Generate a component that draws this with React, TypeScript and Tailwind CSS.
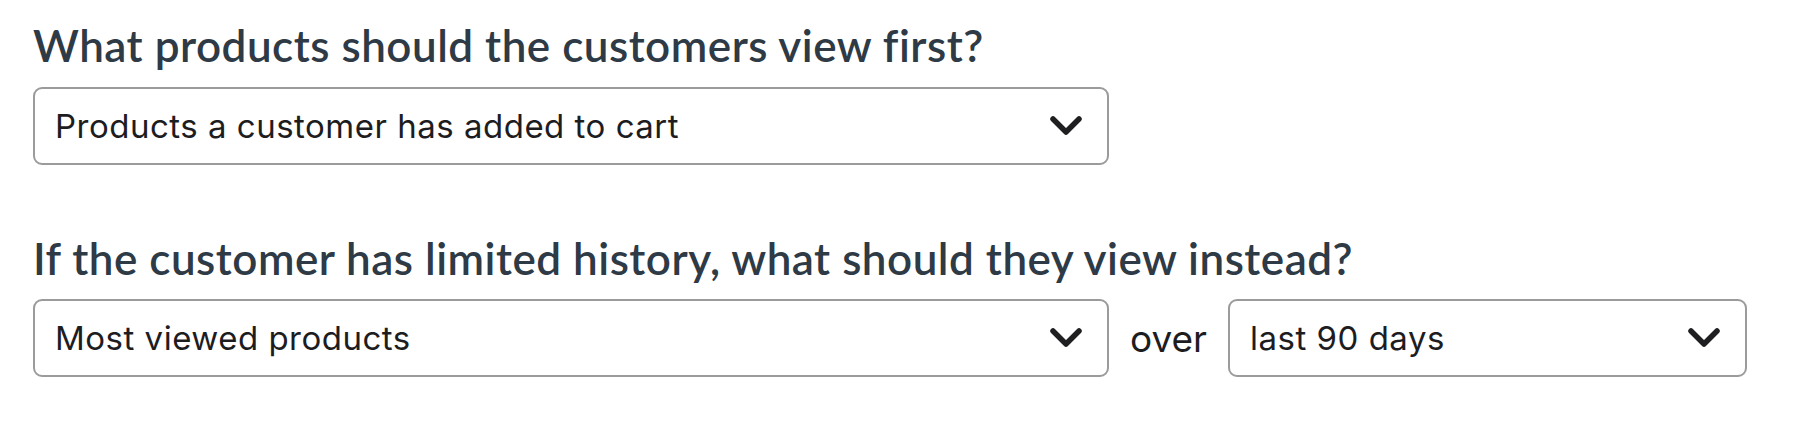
import React from "react";

function Chevron() {
  return (
    <svg width="34" height="22" viewBox="0 0 34 22" fill="none" className="shrink-0">
      <polyline
        points="4,4 17,17 30,4"
        stroke="#1f1f21"
        strokeWidth="5.5"
        strokeLinecap="round"
        strokeLinejoin="round"
      />
    </svg>
  );
}

function Select({ label, width }: { label: string; width: string }) {
  return (
    <div
      className={`${width} h-[78px] border-2 border-[#9b9b9b] rounded-[9px] bg-white flex items-center justify-between pl-[20px] pr-[24px]`}
    >
      <span className="text-[33px] tracking-[0.5px] text-[#1d1d1f] leading-none">{label}</span>
      <Chevron />
    </div>
  );
}

export default function App() {
  return (
    <div
      className="w-full h-[434px] bg-white pl-[33px] pt-[19px]"
      style={{ fontFamily: "Inter, 'Noto Sans', sans-serif" }}
    >
      <h2
        className="text-[44px] font-semibold tracking-[0.5px] text-[#2e3a45] leading-[52px]"
        style={{ fontFamily: "Lato, 'Open Sans', sans-serif" }}
      >
        What products should the customers view first?
      </h2>
      <div className="mt-[16px]">
        <Select label="Products a customer has added to cart" width="w-[1076px]" />
      </div>
      <h2
        className="mt-[67px] text-[44px] font-semibold tracking-[0.5px] text-[#2e3a45] leading-[52px]"
        style={{ fontFamily: "Lato, 'Open Sans', sans-serif" }}
      >
        If the customer has limited history, what should they view instead?
      </h2>
      <div className="mt-[15px] flex items-center gap-[21px]">
        <Select label="Most viewed products" width="w-[1076px]" />
        <span className="text-[37px] text-[#1d1d1f] leading-none">over</span>
        <Select label="last 90 days" width="w-[519px]" />
      </div>
    </div>
  );
}
